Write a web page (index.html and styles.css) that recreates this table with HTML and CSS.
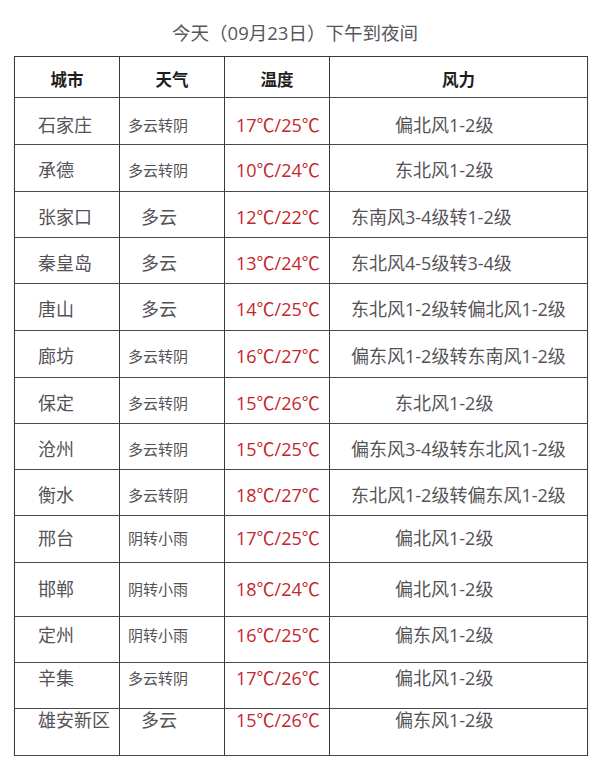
FILE: index.html
```html
<!DOCTYPE html>
<html lang="zh-CN">
<head>
<meta charset="utf-8">
<title>今天（09月23日）下午到夜间</title>
<link rel="stylesheet" href="styles.css">
</head>
<body>
<div class="page">
  <h1 class="title">今天（09月23日）下午到夜间</h1>
  <table class="wx">
    <colgroup><col class="c1"><col class="c2"><col class="c3"><col class="c4"></colgroup>
    <thead>
      <tr class="head"><th>城市</th><th>天气</th><th>温度</th><th>风力</th></tr>
    </thead>
    <tbody>
      <tr class="r47 p15"><td class="city">石家庄</td><td class="wt sm">多云转阴</td><td class="tp">17℃/25℃</td><td class="wd short">偏北风1-2级</td></tr>
      <tr class="r47"><td class="city">承德</td><td class="wt sm">多云转阴</td><td class="tp">10℃/24℃</td><td class="wd short">东北风1-2级</td></tr>
      <tr class="r46"><td class="city">张家口</td><td class="wt lg">多云</td><td class="tp">12℃/22℃</td><td class="wd long">东南风3-4级转1-2级</td></tr>
      <tr class="r46"><td class="city">秦皇岛</td><td class="wt lg">多云</td><td class="tp">13℃/24℃</td><td class="wd long">东北风4-5级转3-4级</td></tr>
      <tr class="r47"><td class="city">唐山</td><td class="wt lg">多云</td><td class="tp">14℃/25℃</td><td class="wd long">东北风1-2级转偏北风1-2级</td></tr>
      <tr class="r47"><td class="city">廊坊</td><td class="wt sm">多云转阴</td><td class="tp">16℃/27℃</td><td class="wd long">偏东风1-2级转东南风1-2级</td></tr>
      <tr class="r46"><td class="city">保定</td><td class="wt sm">多云转阴</td><td class="tp">15℃/26℃</td><td class="wd short">东北风1-2级</td></tr>
      <tr class="r46"><td class="city">沧州</td><td class="wt sm">多云转阴</td><td class="tp">15℃/25℃</td><td class="wd long">偏东风3-4级转东北风1-2级</td></tr>
      <tr class="r46"><td class="city">衡水</td><td class="wt sm">多云转阴</td><td class="tp">18℃/27℃</td><td class="wd long">东北风1-2级转偏东风1-2级</td></tr>
      <tr class="r47 p10"><td class="city">邢台</td><td class="wt sm">阴转小雨</td><td class="tp">17℃/25℃</td><td class="wd short">偏北风1-2级</td></tr>
      <tr class="r54 p14"><td class="city">邯郸</td><td class="wt sm">阴转小雨</td><td class="tp">18℃/24℃</td><td class="wd short">偏北风1-2级</td></tr>
      <tr class="r46 p6"><td class="city">定州</td><td class="wt sm">阴转小雨</td><td class="tp">16℃/25℃</td><td class="wd short">偏东风1-2级</td></tr>
      <tr class="r46 p3"><td class="city">辛集</td><td class="wt sm">多云转阴</td><td class="tp">17℃/26℃</td><td class="wd short">偏北风1-2级</td></tr>
      <tr class="r47 p0"><td class="city">雄安新区</td><td class="wt lg">多云</td><td class="tp">15℃/26℃</td><td class="wd short">偏东风1-2级</td></tr>
    </tbody>
  </table>
</div>
</body>
</html>
```

FILE: styles.css
```css
html, body {
  margin: 0;
  padding: 0;
  background: #ffffff;
}

body {
  font-family: "Open Sans", "Noto Sans CJK SC", sans-serif;
  color: #555258;
}

.page {
  padding-left: 14px;
  width: 574px;
}

.title {
  margin: 0;
  padding: 21px 0 11px;
  font-size: 18.5px;
  line-height: 24px;
  font-weight: normal;
  color: #58555c;
  text-align: center;
  position: relative;
  left: -6px;
}

.wx {
  table-layout: fixed;
  border-collapse: separate;
  border-spacing: 0;
  width: 574px;
  border-top: 1px solid #3a3a3a;
  border-left: 1px solid #3a3a3a;
  box-shadow: 0 1px 1px rgba(0, 0, 0, 0.25);
}

.c1, .c2, .c3 { width: 105px; }
.c4 { width: 258px; }

.wx th,
.wx td {
  border-right: 1px solid #3a3a3a;
  border-bottom: 1px solid #4a4a4a;
  padding: 13px 0 0 0;
  vertical-align: top;
  line-height: 24px;
  white-space: nowrap;
  overflow: hidden;
  font-size: 18px;
  text-align: left;
}

.head { height: 41px; }
.wx .head th {
  font-family: "Noto Sans CJK SC", sans-serif;
  font-size: 16.5px;
  font-weight: 700;
  color: #1e1e1e;
  text-align: center;
  padding-top: 10px;
}

.r46 { height: 46px; }
.r47 { height: 47px; }
.r54 { height: 54px; }

.wx .p15 td { padding-top: 15px; }
.wx .p14 td { padding-top: 14px; }
.wx .p10 td { padding-top: 10px; }
.wx .p6 td { padding-top: 6px; }
.wx .p3 td { padding-top: 3px; }
.wx .p0 td { padding-top: 0; line-height: 22px; }

.wx td.city { padding-left: 23px; }

.wx td.wt.sm { font-size: 15px; padding-left: 8px; }
.wx td.wt.lg { font-size: 18px; padding-left: 21px; }

.wx td.tp {
  color: #c4262c;
  padding-left: 11px;
}

.wx td.wd.short { padding-left: 65px; }
.wx td.wd.long { padding-left: 21px; }
```
